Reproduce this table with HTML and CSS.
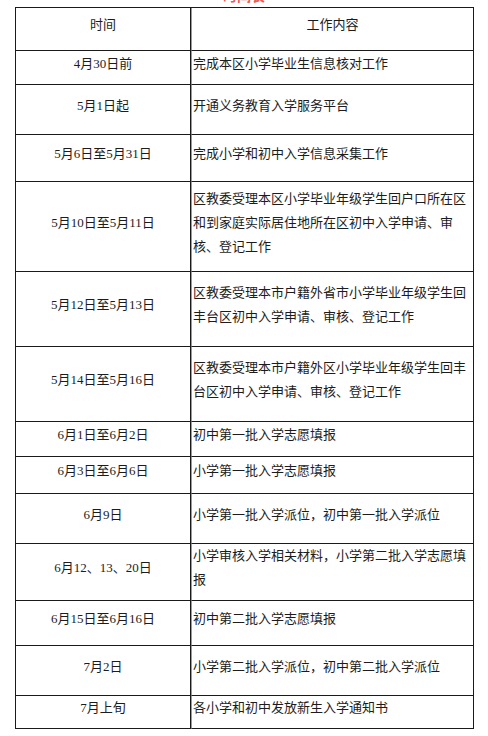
FILE: index.html
```html
<!DOCTYPE html>
<html lang="zh-CN">
<head>
<meta charset="utf-8">
<title>时间安排</title>
<link rel="stylesheet" href="styles.css">
</head>
<body>
<div class="title"><span class="title-text">时间表</span></div>
<table class="sched">
  <tr class="h43"><th class="c-date">时间</th><th class="c-work c-center">工作内容</th></tr>
  <tr class="h34"><td class="c-date">4月30日前</td><td class="c-work">完成本区小学毕业生信息核对工作</td></tr>
  <tr class="h50"><td class="c-date">5月1日起</td><td class="c-work">开通义务教育入学服务平台</td></tr>
  <tr class="h47"><td class="c-date">5月6日至5月31日</td><td class="c-work">完成小学和初中入学信息采集工作</td></tr>
  <tr class="h90"><td class="c-date">5月10日至5月11日</td><td class="c-work">区教委受理本区小学毕业年级学生回户口所在区和到家庭实际居住地所在区初中入学申请、审核、登记工作</td></tr>
  <tr class="h75"><td class="c-date">5月12日至5月13日</td><td class="c-work">区教委受理本市户籍外省市小学毕业年级学生回丰台区初中入学申请、审核、登记工作</td></tr>
  <tr class="h75"><td class="c-date">5月14日至5月16日</td><td class="c-work">区教委受理本市户籍外区小学毕业年级学生回丰台区初中入学申请、审核、登记工作</td></tr>
  <tr class="h35"><td class="c-date">6月1日至6月2日</td><td class="c-work">初中第一批入学志愿填报</td></tr>
  <tr class="h37"><td class="c-date">6月3日至6月6日</td><td class="c-work">小学第一批入学志愿填报</td></tr>
  <tr class="h50"><td class="c-date">6月9日</td><td class="c-work">小学第一批入学派位，初中第一批入学派位</td></tr>
  <tr class="h56"><td class="c-date">6月12、13、20日</td><td class="c-work">小学审核入学相关材料，小学第二批入学志愿填报</td></tr>
  <tr class="h45"><td class="c-date">6月15日至6月16日</td><td class="c-work">初中第二批入学志愿填报</td></tr>
  <tr class="h50"><td class="c-date">7月2日</td><td class="c-work">小学第二批入学派位，初中第二批入学派位</td></tr>
  <tr class="h31"><td class="c-date">7月上旬</td><td class="c-work">各小学和初中发放新生入学通知书</td></tr>
</table>
</body>
</html>
```
FILE: styles.css
```css
html, body {
  margin: 0;
  padding: 0;
  background: #ffffff;
}
body {
  width: 488px;
  height: 736px;
  overflow: hidden;
  font-family: "Liberation Serif", "Noto Sans CJK SC", serif;
  color: #1c1c1c;
}
.title {
  height: 7px;
  overflow: hidden;
  text-align: center;
  padding-left: 0;
}
.title-text {
  display: block;
  margin-top: -13px;
  color: #ec5a5a;
  font-size: 14px;
  line-height: 16px;
  font-family: "Noto Sans CJK SC", sans-serif;
  font-weight: bold;
}
.sched {
  margin-left: 15px;
  width: 459px;
  border-collapse: separate;
  border-spacing: 0;
  border-top: 1px solid #1a1a1a;
  border-left: 1px solid #1a1a1a;
  table-layout: fixed;
  font-size: 13px;
  line-height: 24px;
}
.sched th,
.sched td {
  border-right: 1px solid #1a1a1a;
  border-bottom: 1px solid #1a1a1a;
  padding: 0 0 8px 0;
  vertical-align: middle;
  font-weight: normal;
  box-sizing: border-box;
}
.c-date {
  width: 175px;
  text-align: center;
  white-space: nowrap;
}
.c-work {
  text-align: left;
  padding-left: 1px !important;
  padding-right: 1px !important;
  border-left: 1px solid #9a9a9a;
}
.c-center {
  text-align: center;
}
.h31 { height: 31px; }
.h34 { height: 34px; }
.h35 { height: 35px; }
.h37 { height: 37px; }
.h43 { height: 43px; }
.h45 { height: 45px; }
.h47 { height: 47px; }
.h50 { height: 50px; }
.h56 { height: 56px; }
.h75 { height: 75px; }
.h90 { height: 90px; }
```
